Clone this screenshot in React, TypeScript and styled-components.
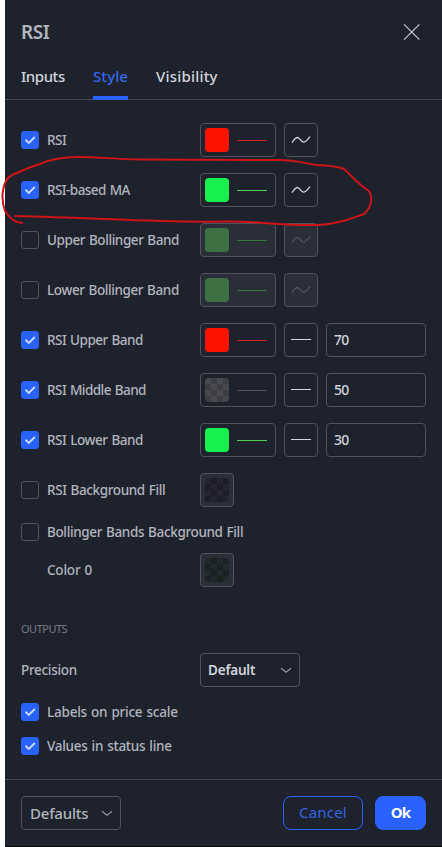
import React from "react";
import styled, { createGlobalStyle, css } from "styled-components";

const Global = createGlobalStyle`
  * { box-sizing: border-box; }
  body { margin: 0; background: #fff; }
  button, input { font-family: inherit; margin: 0; }
`;

const Dialog = styled.div`
  position: relative;
  display: flex;
  flex-direction: column;
  height: 847px;
  margin-left: 5px;
  background: #1e222d;
  border-bottom: 1px solid #07080c;
  color: #b2b5be;
  font-family: "Trebuchet MS", "Noto Sans", sans-serif;
  font-size: 13.5px;
`;

const Header = styled.header`
  display: flex;
  align-items: center;
  justify-content: space-between;
  height: 64px;
  padding: 0 21px 0 16px;
`;

const Title = styled.h1`
  margin: 0;
  font-size: 19px;
  font-weight: 600;
  letter-spacing: -0.5px;
  line-height: 28px;
`;

const CloseButton = styled.button`
  display: flex;
  padding: 0;
  border: 0;
  background: none;
  color: #c5c8d0;
`;

const Tabs = styled.nav`
  display: flex;
  gap: 28px;
  height: 36px;
  padding-left: 16px;
  border-bottom: 1px solid #434651;
`;

const Tab = styled.button<{ $active?: boolean; $width: number; $track?: number }>`
  width: ${(p) => p.$width}px;
  height: 36px;
  padding: 0 0 9px;
  border: 0;
  border-bottom: 4px solid ${(p) => (p.$active ? "#2962ff" : "transparent")};
  background: none;
  color: ${(p) => (p.$active ? "#3467ea" : "#d1d4dc")};
  font-size: 15px;
  font-weight: 500;
  line-height: 22px;
  letter-spacing: ${(p) => p.$track ?? 0}px;
  white-space: nowrap;
  text-align: left;
`;

const Body = styled.main`
  display: flex;
  flex-direction: column;
  flex: 1;
  padding: 23px 16px 0;
`;

const Plots = styled.section`
  display: flex;
  flex-direction: column;
  gap: 16px;
`;

const Row = styled.div<{ $height?: number; $top?: number }>`
  display: grid;
  grid-template-columns: 179px auto;
  align-items: center;
  height: ${(p) => p.$height ?? 34}px;
  margin-top: ${(p) => p.$top ?? 0}px;
`;

const CheckLabel = styled.label`
  display: flex;
  align-items: center;
  gap: 8px;
  height: 18px;
  white-space: nowrap;
`;

const Box = styled.span<{ $checked: boolean }>`
  display: flex;
  flex: none;
  align-items: center;
  justify-content: center;
  width: 18px;
  height: 18px;
  border: 1px solid ${(p) => (p.$checked ? "#2962ff" : "#50535e")};
  border-radius: 3px;
  background: ${(p) => (p.$checked ? "#2962ff" : "transparent")};
`;

const Caption = styled.span<{ $indent?: boolean; $track?: number }>`
  padding-left: ${(p) => (p.$indent ? 26 : 0)}px;
  font-weight: 500;
  line-height: 18px;
  letter-spacing: ${(p) => p.$track ?? 0}px;
  word-spacing: 0.8px;
`;

const Controls = styled.div`
  display: flex;
  gap: 8px;
`;

const frame = css<{ $disabled?: boolean }>`
  display: flex;
  align-items: center;
  height: 34px;
  border: 1px solid #50535e;
  border-radius: 4px;
  background: ${(p) => (p.$disabled ? "#2a2e39" : "transparent")};
`;

const ColorField = styled.button<{ $disabled?: boolean; $compact?: boolean }>`
  ${frame}
  width: ${(p) => (p.$compact ? 34 : 76)}px;
  gap: 8px;
  padding: 0 4px;
`;

const Swatch = styled.span<{ $color: string; $alt?: string }>`
  width: 24px;
  height: 24px;
  border-radius: 4px;
  background: ${(p) =>
    p.$alt
      ? `repeating-conic-gradient(${p.$alt} 0 25%, ${p.$color} 0 50%) 0 0 / 12px 12px`
      : p.$color};
`;

const Stroke = styled.span<{ $color: string }>`
  width: 30px;
  height: 1px;
  background: ${(p) => p.$color};
`;

const LineField = styled.button<{ $disabled?: boolean }>`
  ${frame}
  justify-content: center;
  width: 34px;
  padding: 0;
  color: ${(p) => (p.$disabled ? "#50535e" : "#d1d4dc")};
`;

const NumberField = styled.input`
  ${frame}
  width: 100px;
  padding: 0 7px 2px;
  outline: 0;
  color: #d1d4dc;
  font-size: 14px;
  font-weight: 500;
  letter-spacing: -0.7px;
`;

const SectionTitle = styled.h2`
  margin: 32px 0 14px;
  color: #787b86;
  font-size: 11px;
  font-weight: 400;
  line-height: 20px;
  letter-spacing: -0.5px;
`;

const Select = styled.button<{ $footer?: boolean }>`
  ${frame}
  justify-content: space-between;
  width: 100px;
  padding: 0 7px 0 ${(p) => (p.$footer ? 8 : 7)}px;
  color: ${(p) => (p.$footer ? "#b2b5be" : "#d1d4dc")};
  font-size: ${(p) => (p.$footer ? 15 : 13.5)}px;
  font-weight: ${(p) => (p.$footer ? 500 : 600)};
  letter-spacing: -0.2px;
`;

const Footer = styled.footer`
  display: flex;
  align-items: center;
  gap: 12px;
  height: 67px;
  padding: 0 16px;
  border-top: 1px solid #434651;
`;

const Spacer = styled.div`
  flex: 1;
`;

const Action = styled.button<{ $primary?: boolean }>`
  width: ${(p) => (p.$primary ? 51 : 80)}px;
  height: 34px;
  padding: 0 0 2px;
  border: 1px solid #2962ff;
  border-radius: 8px;
  background: ${(p) => (p.$primary ? "#2962ff" : "transparent")};
  color: ${(p) => (p.$primary ? "#fff" : "#3264e6")};
  font-size: 15px;
  font-weight: ${(p) => (p.$primary ? 700 : 400)};
  letter-spacing: ${(p) => (p.$primary ? -0.8 : 0.2)}px;
`;

const Annotation = styled.svg`
  position: absolute;
  top: 150px;
  left: -5px;
  pointer-events: none;
`;

const Check = () => (
  <svg width="12" height="10" viewBox="0 0 12 10" fill="none">
    <path d="M1.5 4.8 4.8 7.9 10.8 2" stroke="#c9dafc" strokeWidth="1.9" />
  </svg>
);

const Wave = () => (
  <svg width="20" height="10" viewBox="0 0 20 10" fill="none">
    <path
      d="M.9 7.6C3 5 4.4 2.5 6.3 2.5c2.6 0 3.8 4.7 6.4 4.7 1.8 0 3.7-2.6 6.3-5.5"
      stroke="currentColor"
      strokeWidth="1.3"
    />
  </svg>
);

const Straight = () => (
  <svg width="20" height="10" viewBox="0 0 20 10">
    <path d="M0 4.5H20" stroke="currentColor" />
  </svg>
);

const Chevron = () => (
  <svg width="12" height="7" viewBox="0 0 12 7" fill="none">
    <path d="m1 1.2 5 4 5-4" stroke="#9699a3" strokeWidth="1.1" />
  </svg>
);

type Plot = {
  name: string;
  checked: boolean;
  color: string;
  alt?: string;
  stroke?: string;
  level?: string;
  track?: number;
};

const plots: Plot[] = [
  { name: "RSI", checked: true, color: "#ff1100", stroke: "#d31f20", track: -0.5 },
  { name: "RSI-based MA", checked: true, color: "#17f04e", stroke: "#4fd052", track: -0.55 },
  { name: "Upper Bollinger Band", checked: false, color: "#3d7143", stroke: "#397442", track: -0.42 },
  { name: "Lower Bollinger Band", checked: false, color: "#3d7143", stroke: "#397442", track: -0.4 },
  { name: "RSI Upper Band", checked: true, color: "#ff1100", stroke: "#d31f20", level: "70", track: -0.5 },
  { name: "RSI Middle Band", checked: true, color: "#48484e", alt: "#3d3d44", stroke: "#50525a", level: "50", track: -0.53 },
  { name: "RSI Lower Band", checked: true, color: "#17f04e", stroke: "#4fd052", level: "30", track: -0.45 },
  { name: "RSI Background Fill", checked: false, color: "#252433", alt: "#1e1d2b", track: -0.38 },
];

function CheckItem({ name, checked, track }: { name: string; checked: boolean; track?: number }) {
  return (
    <CheckLabel>
      <Box $checked={checked}>{checked && <Check />}</Box>
      <Caption $track={track}>{name}</Caption>
    </CheckLabel>
  );
}

function PlotRow({ plot }: { plot: Plot }) {
  const disabled = !plot.checked;
  return (
    <Row>
      <CheckItem name={plot.name} checked={plot.checked} track={plot.track} />
      <Controls>
        <ColorField $disabled={disabled} $compact={!plot.stroke}>
          <Swatch $color={plot.color} $alt={plot.alt} />
          {plot.stroke && <Stroke $color={plot.stroke} />}
        </ColorField>
        {plot.stroke && (
          <LineField $disabled={disabled}>{plot.level ? <Straight /> : <Wave />}</LineField>
        )}
        {plot.level && <NumberField defaultValue={plot.level} />}
      </Controls>
    </Row>
  );
}

export default function App() {
  return (
    <>
      <Global />
      <Dialog>
        <Header>
          <Title>RSI</Title>
          <CloseButton aria-label="Close">
            <svg width="18" height="18" viewBox="0 0 18 18" fill="none">
              <path d="m1 1.3 15.4 15.4M16.4 1.3 1 16.7" stroke="currentColor" strokeWidth="1.2" />
            </svg>
          </CloseButton>
        </Header>
        <Tabs>
          <Tab $width={44} $track={-0.45}>Inputs</Tab>
          <Tab $width={35} $track={0.1} $active>Style</Tab>
          <Tab $width={62} $track={0.2}>Visibility</Tab>
        </Tabs>
        <Body>
          <Plots>
            {plots.map((plot) => (
              <PlotRow key={plot.name} plot={plot} />
            ))}
          </Plots>
          <Row $height={18} $top={16}>
            <CheckItem name="Bollinger Bands Background Fill" checked={false} track={-0.36} />
          </Row>
          <Row $top={12}>
            <Caption $indent $track={-0.2}>Color 0</Caption>
            <ColorField $disabled $compact>
              <Swatch $color="#202a2c" $alt="#1a2323" />
            </ColorField>
          </Row>
          <SectionTitle>OUTPUTS</SectionTitle>
          <Row>
            <Caption $track={-0.3}>Precision</Caption>
            <Select>
              Default
              <Chevron />
            </Select>
          </Row>
          <Row $height={18} $top={16}>
            <CheckItem name="Labels on price scale" checked track={-0.22} />
          </Row>
          <Row $height={18} $top={16}>
            <CheckItem name="Values in status line" checked track={-0.27} />
          </Row>
        </Body>
        <Footer>
          <Select $footer>
            Defaults
            <Chevron />
          </Select>
          <Spacer />
          <Action>Cancel</Action>
          <Action $primary>Ok</Action>
        </Footer>
        <Annotation width="380" height="80" viewBox="0 150 380 80" fill="none">
          <path
            d="M22 223C14 223 9 217 5 211C1 200 1 181 12 175C20 172 29 167 40 164C51 159 62 157 78 157C101 157 112 159 140 159.5L280 160C297 160 302 163 317 165C331 166 337 166 344 169C353 177 359 185 369 191C373 197 372 207 364 214C350 219 338 224 318 225C279 226 260 221 225 221.5C160 223 103 218 15 216"
            stroke="#cf1418"
            strokeWidth="2"
            strokeLinecap="round"
            strokeLinejoin="round"
          />
        </Annotation>
      </Dialog>
    </>
  );
}
